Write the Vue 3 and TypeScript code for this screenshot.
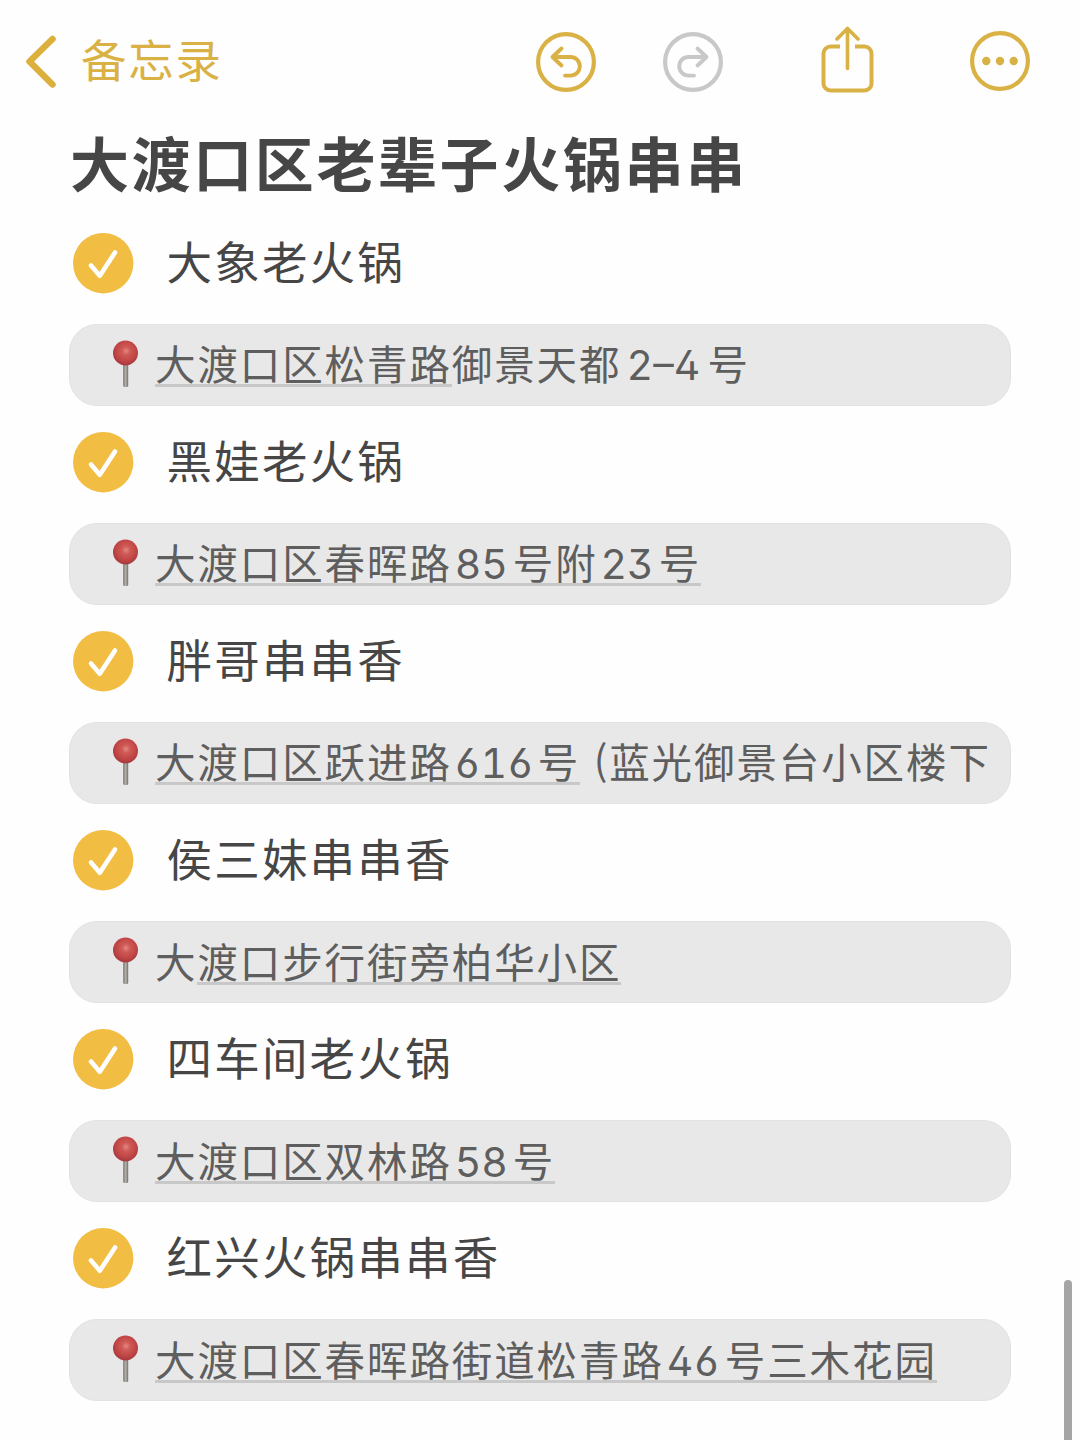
<script setup lang="ts">
interface Run {
  text: string
  kind?: 'num' | 'paren'
  width?: number
}

interface Part {
  linked: boolean
  runs: Run[]
}

interface Place {
  name: string
  address: Part[]
}

const title = '大渡口区老辈子火锅串串'

const places: Place[] = [
  {
    name: '大象老火锅',
    address: [
      { linked: true, runs: [{ text: '大渡口区松青路' }] },
      { linked: false, runs: [{ text: '御景天都' }, { text: '2–4', kind: 'num', width: 86 }, { text: '号' }] },
    ],
  },
  {
    name: '黑娃老火锅',
    address: [
      {
        linked: true,
        runs: [
          { text: '大渡口区春晖路' },
          { text: '85', kind: 'num', width: 61 },
          { text: '号附' },
          { text: '23', kind: 'num', width: 61 },
          { text: '号' },
        ],
      },
    ],
  },
  {
    name: '胖哥串串香',
    address: [
      {
        linked: true,
        runs: [{ text: '大渡口区跃进路' }, { text: '616', kind: 'num', width: 86 }, { text: '号' }],
      },
      { linked: false, runs: [{ text: '(', kind: 'paren', width: 29 }, { text: '蓝光御景台小区楼下' }] },
    ],
  },
  {
    name: '侯三妹串串香',
    address: [
      { linked: false, runs: [{ text: '大' }] },
      { linked: true, runs: [{ text: '渡口步行街旁柏华小区' }] },
    ],
  },
  {
    name: '四车间老火锅',
    address: [
      {
        linked: true,
        runs: [{ text: '大渡口区双林路' }, { text: '58', kind: 'num', width: 61 }, { text: '号' }],
      },
    ],
  },
  {
    name: '红兴火锅串串香',
    address: [
      {
        linked: true,
        runs: [
          { text: '大渡口区春晖路街道松青路' },
          { text: '46', kind: 'num', width: 61 },
          { text: '号三木花园' },
        ],
      },
    ],
  },
]
</script>

<template>
  <main class="screen">
    <header class="nav">
      <svg class="back" width="36" height="56" viewBox="0 0 36 56" fill="none">
        <path d="M31.500 6 8.500 28.500 31.500 51.500" stroke="currentColor" stroke-width="6.500" stroke-linecap="round" stroke-linejoin="round" />
      </svg>
      <span class="back-label">备忘录</span>
      <svg class="undo" width="60" height="60" viewBox="0 0 60 60" fill="none" stroke="currentColor" stroke-linecap="round" stroke-linejoin="round">
        <circle cx="30" cy="30" r="27.900" stroke-width="4.200" />
        <path d="M25.500 16.500 16.500 25 25.500 33.500M17 25H34.500A9.300 9.300 0 0 1 34.500 43.600H29" stroke-width="3.900" />
      </svg>
      <svg class="redo" width="60" height="60" viewBox="0 0 60 60" fill="none" stroke="currentColor" stroke-linecap="round" stroke-linejoin="round">
        <circle cx="30" cy="30" r="27.900" stroke-width="4.200" />
        <path d="M34.500 16.500 43.500 25 34.500 33.500M43 25H25.500A9.300 9.300 0 0 0 25.500 43.600H31" stroke-width="3.900" />
      </svg>
      <svg class="share" width="54" height="68" viewBox="0 0 54 68" fill="none" stroke="currentColor" stroke-width="4">
        <path d="M19 20.500H9.500A7 7 0 0 0 2.500 27.500V57.500A7 7 0 0 0 9.500 64.500H43.500A7 7 0 0 0 50.500 57.500V27.500A7 7 0 0 0 43.500 20.500H34" />
        <path d="M26.500 42.500V3M16 13 26.500 2.500 37 13" stroke-width="3.600" stroke-linecap="round" stroke-linejoin="round" />
      </svg>
      <svg class="more" width="60" height="60" viewBox="0 0 60 60" fill="none">
        <circle cx="30" cy="30" r="27.900" stroke="currentColor" stroke-width="4.200" />
        <g fill="currentColor">
          <circle cx="16.300" cy="30" r="4.200" />
          <circle cx="30" cy="30" r="4.200" />
          <circle cx="43.700" cy="30" r="4.200" />
        </g>
      </svg>
    </header>

    <h1 class="title">{{ title }}</h1>

    <ul class="list">
      <li v-for="place in places" :key="place.name" class="place">
        <div class="check-row">
          <svg class="check" width="61" height="61" viewBox="0 0 61 61" fill="none">
            <circle cx="30.200" cy="30.200" r="30.200" fill="#f1bd42" />
            <path d="M18 32.500 26.800 42.700 42 19.500" stroke="#fff" stroke-width="4.600" stroke-linecap="round" stroke-linejoin="round" />
          </svg>
          <span class="name">{{ place.name }}</span>
        </div>
        <div class="address">
          <svg class="pin" width="28" height="50" viewBox="0 0 28 50">
            <defs>
              <radialGradient id="pin-ball" cx="0.520" cy="0.420" r="0.550">
                <stop offset="0" stop-color="#e58a80" />
                <stop offset="0.300" stop-color="#cf5a55" />
                <stop offset="0.750" stop-color="#c04545" />
                <stop offset="1" stop-color="#a93a40" />
              </radialGradient>
              <linearGradient id="pin-stem" x1="0" x2="1" y1="0" y2="0">
                <stop offset="0" stop-color="#77746f" />
                <stop offset="0.500" stop-color="#b5b2ad" />
                <stop offset="1" stop-color="#706d68" />
              </linearGradient>
            </defs>
            <rect x="11.200" y="24" width="5" height="24" rx="1.500" fill="url(#pin-stem)" />
            <circle cx="13.500" cy="14" r="12.500" fill="url(#pin-ball)" />
          </svg>
          <span v-for="(part, p) in place.address" :key="p" class="part" :class="{ linked: part.linked }">
            <span
              v-for="(run, r) in part.runs"
              :key="r"
              class="run"
              :class="run.kind"
              :style="run.width ? { width: run.width + 'px' } : undefined"
            >{{ run.text }}</span>
          </span>
        </div>
      </li>
    </ul>

    <div class="scrollbar"></div>
  </main>
</template>

<style>
body {
  background: #fefefe;
}
</style>

<style scoped>
.screen {
  position: relative;
  width: 1080px;
  height: 1440px;
  overflow: hidden;
  background: #fefefe;
  color: #464646;
  font-family: "Noto Sans CJK SC", sans-serif;
}

.nav {
  display: flex;
  align-items: center;
  height: 124px;
  padding-left: 21px;
  color: #d9b145;
}

.nav svg {
  flex: none;
}

.nav .back {
  margin-top: -3px;
  color: #dcb03c;
}

.back-label {
  width: 455px;
  height: 60px;
  margin: -8px 0 0 24px;
  font-size: 45.500px;
  line-height: 60px;
  letter-spacing: 1.800px;
  white-space: nowrap;
}

.redo {
  margin-left: 67px;
  color: #c8c8c8;
}

.share {
  margin: -4px 0 0 98px;
}

.more {
  margin: -2px 0 0 95px;
}

.title {
  height: 84px;
  margin: 0;
  padding-left: 70px;
  font-size: 59px;
  font-weight: 700;
  line-height: 76px;
  letter-spacing: 2.600px;
  white-space: nowrap;
}

.list {
  margin: 0;
  padding: 24.500px 69.500px 0 69px;
  list-style: none;
}

.place {
  height: 199.200px;
}

.check-row {
  display: flex;
  align-items: flex-start;
  height: 61px;
  padding-left: 4px;
}

.check {
  flex: none;
}

.name {
  margin-left: 32.500px;
  font-size: 45.500px;
  line-height: 54px;
  letter-spacing: 2.200px;
  white-space: nowrap;
}

.address {
  display: flex;
  align-items: center;
  box-sizing: border-box;
  height: 82px;
  margin-top: 30px;
  padding: 0 0 1px 41.500px;
  border: 1px solid #e2e2e2;
  border-radius: 28px;
  background: #e8e8e8;
  color: #5e5e5e;
}

.pin {
  flex: none;
  margin: -1px 15.500px 0 0;
}

.part {
  display: flex;
  height: 43px;
  border-bottom: 3px solid transparent;
  font-size: 40.500px;
  line-height: 44px;
  white-space: nowrap;
}

.part.linked {
  border-bottom-color: #c8c8c8;
}

.run {
  letter-spacing: 1.900px;
}

.num {
  font-family: Inter, sans-serif;
  box-sizing: border-box;
  padding-right: 2px;
  font-size: 41px;
  font-feature-settings: "tnum", "ss01";
  line-height: 48px;
  letter-spacing: 0;
  text-align: center;
}

.paren {
  line-height: 37px;
  text-align: right;
}

.scrollbar {
  position: absolute;
  top: 1280px;
  right: 8px;
  width: 8.500px;
  height: 170px;
  border-radius: 4px;
  background: #a5a5a5;
}
</style>
